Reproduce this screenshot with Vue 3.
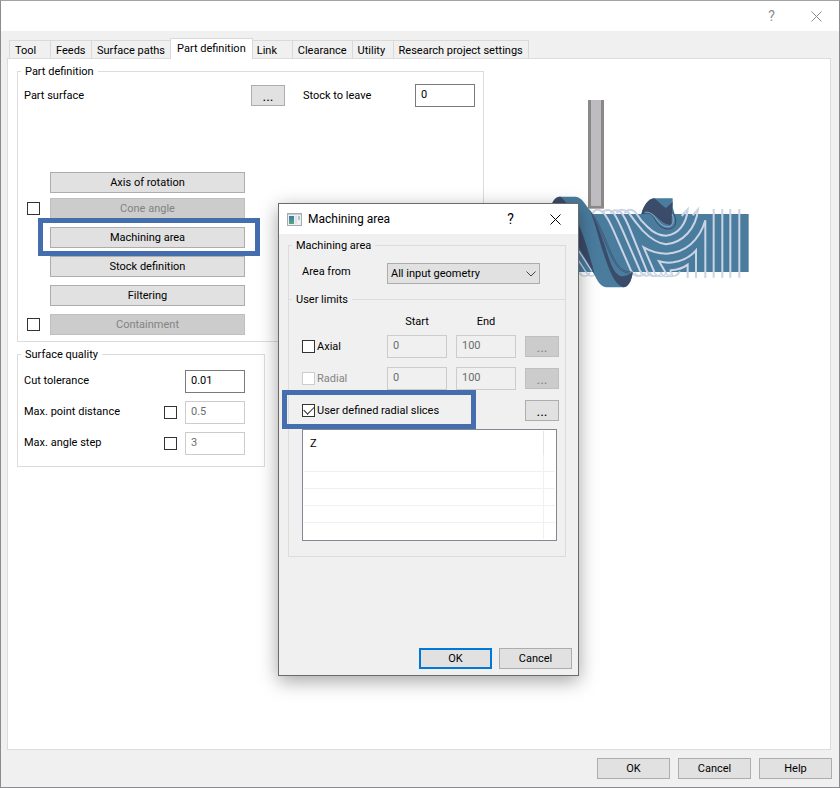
<template>
  <div class="window">
    <header class="titlebar">
      <button class="title-btn" type="button" aria-label="Help">?</button>
      <button class="title-btn" type="button" aria-label="Close">
        <svg width="11" height="11" viewBox="0 0 11 11"><path d="M0.5 0.5l10 10M10.5 0.5l-10 10" /></svg>
      </button>
    </header>

    <nav class="tabs">
      <button
        v-for="tab in tabs"
        :key="tab"
        type="button"
        class="tab"
        :class="{ active: tab === activeTab }"
        @click="activeTab = tab"
      >{{ tab }}</button>
    </nav>

    <main class="panel">
      <div class="column">
        <fieldset class="group part">
          <legend>Part definition</legend>
          <div class="surface-row">
            <span class="surface-label">Part surface</span>
            <button class="btn more" type="button">...</button>
            <label class="stock-label" for="stock">Stock to leave</label>
            <input id="stock" v-model="stock" class="field" type="text">
          </div>
          <div class="actions">
            <div class="action-pair">
              <div class="action">
                <button class="btn wide" type="button">Axis of rotation</button>
              </div>
              <div class="action">
                <input v-model="coneAngle" class="check" type="checkbox" aria-label="Cone angle">
                <button class="btn wide" type="button" :disabled="!coneAngle">Cone angle</button>
              </div>
            </div>
            <div class="action">
              <button class="btn wide" type="button">Machining area</button>
              <span class="marker marker-button"></span>
            </div>
            <div class="action">
              <button class="btn wide" type="button">Stock definition</button>
            </div>
            <div class="action">
              <button class="btn wide" type="button">Filtering</button>
            </div>
            <div class="action">
              <input v-model="containment" class="check" type="checkbox" aria-label="Containment">
              <button class="btn wide" type="button" :disabled="!containment">Containment</button>
            </div>
          </div>
        </fieldset>

        <fieldset class="group quality">
          <legend>Surface quality</legend>
          <div v-for="row in quality" :key="row.id" class="quality-row">
            <label :for="row.id">{{ row.label }}</label>
            <input v-if="row.optional" v-model="row.on" class="check" type="checkbox" :aria-label="row.label">
            <input :id="row.id" v-model="row.value" class="field" type="text" :disabled="row.optional && !row.on">
          </div>
        </fieldset>
      </div>

      <svg class="preview" viewBox="0 0 690 660" width="230" height="220">
        <!-- screw core -->
        <rect x="60" y="402" width="566" height="174" fill="#4a7c9e" />
        <!-- rear flank -->
        <path d="M304 402C312 374 326 356 342 355H398V382C404 400 408 420 404 434C396 452 372 452 358 440C342 424 330 400 304 402Z" fill="#4a7c9e" />
        <path d="M304 402C312 374 326 356 342 355C352 360 366 378 378 384L398 366L394 434C384 436 372 430 360 420C342 404 336 392 304 402Z" fill="#3b4b6a" />
        <path d="M306 402C336 390 340 414 354 432C368 448 390 452 402 440C412 428 406 406 398 396" fill="none" stroke="#3b4b6a" stroke-width="3" />
        <path d="M314 397C336 392 346 416 360 430C374 442 388 444 396 434C402 426 400 410 396 402" fill="none" stroke="#b9c7da" stroke-width="2" />
        <!-- tool path -->
        <g fill="none" stroke="#cbd4e5" stroke-width="6">
          <path d="M158 400C164 386 182 386 193 401C204 416 211 430 218 446L273 572C280 588 294 592 304 584" />
          <path d="M186 400C194 386 212 386 223 402C234 420 241 436 248 452L300 572C308 588 322 592 332 582" />
          <path d="M212 400C218 388 236 388 246 400C254 412 260 424 266 438L320 572C328 590 342 592 352 584" />
          <path d="M230 400C238 386 256 386 268 401C284 424 296 438 308 452C330 474 354 491 378 493C428 488 468 446 474 388L458 406" />
          <path d="M254 400C262 386 278 386 288 399C298 416 308 428 323 441C340 458 358 467 378 467C414 464 440 432 443 388L425 408" />
          <path d="M343 576L311 502C332 514 354 521 380 521C436 518 478 482 496 421V594" />
          <path d="M376 576L357 544C372 548 386 549 400 547C430 542 452 530 468 511V594" />
          <path d="M392 580V571C414 570 430 564 443 554V594" />
          <path d="M521 387V593M547 387V593M571 387V593M598 387V593" />
        </g>
        <g fill="none" stroke="#cbd4e5" stroke-width="4">
          <path d="M284 578C290 590 306 594 318 578M330 576C336 592 356 594 366 576M342 576C350 594 370 594 380 576M362 576C368 594 388 594 398 578M376 576C384 594 404 594 416 576M394 580C400 592 412 590 420 574" />
          <path d="M112 536L142 582M116 512L156 574M118 578C126 592 142 592 150 578M140 578C148 592 162 590 166 580" />
        </g>
        <!-- front flank -->
        <path d="M36 372C42 354 52 350 62 350H106C128 352 136 376 152 392C178 430 198 500 222 540C238 568 250 580 278 576C276 602 264 622 250 622H198C176 618 166 590 152 560L116 490Z" fill="#4a7c9e" />
        <path d="M36 372C42 354 52 350 62 350C78 364 92 388 110 420C128 456 148 520 164 584L116 500Z" fill="#3b4b6a" />
        <path d="M150 392C166 416 180 454 194 496C208 540 218 572 234 584C248 594 266 586 278 576C276 602 264 622 250 622C222 612 210 574 194 530C178 484 166 428 150 392Z" fill="#3b4b6a" />
        <path d="M154 398C184 432 204 508 228 546C242 570 258 576 276 576M158 408C184 446 204 522 230 556C242 572 252 578 270 579M116 506L158 560" fill="none" stroke="#3b4b6a" stroke-width="2" />
        <!-- tool -->
        <rect x="144" y="60" width="48" height="326" fill="#8b8986" />
        <rect x="153" y="60" width="30" height="318" fill="#bfbcc1" />
      </svg>
    </main>

    <footer class="footer">
      <button class="btn foot" type="button">OK</button>
      <button class="btn foot" type="button">Cancel</button>
      <button class="btn foot" type="button">Help</button>
    </footer>

    <section class="dialog" role="dialog" aria-labelledby="dialog-title">
      <header class="dialog-bar">
        <svg class="dialog-icon" width="15" height="13" viewBox="0 0 15 13">
          <defs>
            <linearGradient id="pane" x1="0" y1="0" x2="0" y2="1">
              <stop offset="0" stop-color="#3f78a8" />
              <stop offset="1" stop-color="#58a77c" />
            </linearGradient>
          </defs>
          <rect x="0.5" y="0.5" width="14" height="12" fill="#eef1f4" stroke="#a4abb3" />
          <path d="M1 1.5H14" stroke="#c8ced6" />
          <rect x="2" y="3" width="5" height="8" fill="url(#pane)" />
          <rect x="8" y="3" width="2" height="8" fill="#dde3e8" />
          <rect x="11" y="3" width="2" height="4" fill="#a9cdb8" />
        </svg>
        <h2 id="dialog-title">Machining area</h2>
        <button class="title-btn" type="button" aria-label="Help">?</button>
        <button class="title-btn" type="button" aria-label="Close">
          <svg width="11" height="11" viewBox="0 0 11 11"><path d="M0.5 0.5l10 10M10.5 0.5l-10 10" /></svg>
        </button>
      </header>

      <div class="dialog-body">
        <fieldset class="group area">
          <legend>Machining area</legend>
          <div class="area-row">
            <label for="area-from">Area from</label>
            <div class="select">
              <select id="area-from">
                <option>All input geometry</option>
              </select>
              <svg width="10" height="6" viewBox="0 0 10 6"><path d="M0.5 0.5L5 5L9.5 0.5" /></svg>
            </div>
          </div>
        </fieldset>

        <fieldset class="group limits">
          <legend>User limits</legend>
          <div class="grid-row heads">
            <span></span>
            <span>Start</span>
            <span>End</span>
          </div>
          <div v-for="limit in limits" :key="limit.label" class="grid-row">
            <label class="check-label" :class="{ off: limit.locked }">
              <input v-model="limit.on" class="check" type="checkbox" :disabled="limit.locked">{{ limit.label }}
            </label>
            <input v-model="limit.start" class="field" type="text" :aria-label="limit.label + ' start'" :disabled="!limit.on">
            <input v-model="limit.end" class="field" type="text" :aria-label="limit.label + ' end'" :disabled="!limit.on">
            <button class="btn more" type="button" :disabled="!limit.on">...</button>
          </div>
          <div class="grid-row">
            <label class="check-label slices">
              <input v-model="slices" class="check" type="checkbox">User defined radial slices
            </label>
            <button class="btn more" type="button" :disabled="!slices">...</button>
            <span class="marker marker-slices"></span>
          </div>
          <table class="list">
            <thead>
              <tr><th>Z</th><th></th></tr>
            </thead>
            <tbody>
              <tr v-for="n in 5" :key="n"><td></td><td></td></tr>
            </tbody>
          </table>
        </fieldset>

        <div class="dialog-foot">
          <button class="btn foot primary" type="button">OK</button>
          <button class="btn foot" type="button">Cancel</button>
        </div>
      </div>
    </section>
  </div>
</template>

<script setup>
import { ref } from 'vue'

const tabs = [
  'Tool',
  'Feeds',
  'Surface paths',
  'Part definition',
  'Link',
  'Clearance',
  'Utility',
  'Research project settings'
]
const activeTab = ref('Part definition')

const stock = ref('0')
const coneAngle = ref(false)
const containment = ref(false)

const quality = ref([
  { id: 'cut', label: 'Cut tolerance', value: '0.01', optional: false, on: true },
  { id: 'distance', label: 'Max. point distance', value: '0.5', optional: true, on: false },
  { id: 'angle', label: 'Max. angle step', value: '3', optional: true, on: false }
])

const limits = ref([
  { label: 'Axial', start: '0', end: '100', on: false, locked: false },
  { label: 'Radial', start: '0', end: '100', on: false, locked: true }
])
const slices = ref(true)
</script>

<style>
body {
  margin: 0;
}
</style>

<style scoped>
.window,
.window * {
  box-sizing: border-box;
}

.window {
  position: relative;
  display: flex;
  flex-direction: column;
  min-height: 100vh;
  border: 1px solid #8c8c8e;
  border-top-color: #a2a2a9;
  background: #f0f0f0;
  color: #000;
  font-family: Roboto, "Liberation Sans", sans-serif;
  font-size: 11px;
  line-height: 13px;
}

button,
input,
select {
  margin: 0;
  color: inherit;
  font: inherit;
}

.titlebar {
  display: flex;
  justify-content: flex-end;
  height: 30px;
  background: #fff;
  color: #8c8c8c;
}

.title-btn {
  display: flex;
  align-items: center;
  justify-content: center;
  width: 45px;
  height: 30px;
  padding: 0;
  border: 0;
  background: none;
  font-size: 14px;
}

.title-btn path {
  fill: none;
  stroke: currentColor;
  stroke-width: 1;
}

.tabs {
  display: flex;
  align-items: flex-end;
  height: 28px;
  padding: 0 8px;
}

.tab {
  height: 19px;
  min-width: 42px;
  margin-right: -1px;
  padding: 1px 5px 0;
  border: 1px solid #d9d9d9;
  border-bottom: 0;
  background: #f0f0f0;
  text-align: left;
  white-space: nowrap;
}

.tab.active {
  z-index: 1;
  height: 21px;
  margin-right: -2px;
  padding: 0 6px 1px;
  background: #fff;
}

.panel {
  display: flex;
  flex: 1;
  align-items: flex-start;
  margin: -1px 8px 0 6px;
  padding: 6px 9px;
  border: 1px solid #dcdcdc;
  background: #fff;
}

.column {
  flex: none;
  width: 467px;
}

.group {
  min-width: 0;
  margin: 0;
  padding: 0;
  border: 1px solid #dcdcdc;
}

.group legend {
  margin-left: -3px;
  padding: 0 4px;
}

.dialog .group legend {
  margin-left: -10px;
}

.part {
  padding: 6px 8px 6px 6px;
}

.surface-row {
  display: flex;
  align-items: center;
}

.surface-label {
  flex: 1;
}

.stock-label {
  width: 112px;
  margin-left: 18px;
}

.btn {
  flex: none;
  height: 21px;
  padding: 0;
  border: 1px solid #adadad;
  background: #e1e1e1;
  text-align: center;
}

.btn:disabled {
  border-color: #bfbfbf;
  background: #ccc;
  color: #838383;
}

.more {
  width: 34px;
  padding-top: 1px;
  font-size: 14px;
}

.wide {
  width: 195px;
}

.foot {
  width: 73px;
}

.primary {
  border: 2px solid #0078d7;
}

.field {
  flex: none;
  width: 60px;
  height: 23px;
  padding: 0 5px 2px;
  border: 1px solid #7a7a7a;
  background: #fff;
}

.field:disabled {
  border-color: #ccc;
  background: transparent;
  color: #6d6d6d;
}

.check {
  position: relative;
  flex: none;
  width: 13px;
  height: 13px;
  border: 1px solid #333;
  background: #fff;
  appearance: none;
}

.check:disabled {
  border-color: #ccc;
}

.check:checked::after {
  content: "";
  position: absolute;
  top: -1px;
  left: 3px;
  width: 5px;
  height: 9px;
  border: solid #333;
  border-width: 0 1px 1px 0;
  transform: rotate(45deg);
}

.actions {
  display: flex;
  flex-direction: column;
  gap: 8px;
  margin-top: 65px;
}

.action-pair {
  display: flex;
  flex-direction: column;
  gap: 5px;
}

.action {
  position: relative;
  display: flex;
  align-items: center;
  justify-content: flex-end;
  gap: 10px;
  width: 221px;
}

/* callout frames, drawn over the controls they point at */
.marker {
  position: absolute;
  z-index: 1;
  border: 5px solid #446ead;
  pointer-events: none;
}

.marker-button {
  inset: -9px -15px -8px 14px;
}

.quality {
  width: 248px;
  margin-top: 6px;
  padding: 9px 19px 11px 6px;
}

.quality-row {
  display: flex;
  align-items: center;
  gap: 8px;
}

.quality-row + .quality-row {
  margin-top: 8px;
}

.quality-row label {
  flex: 1;
  padding-bottom: 2px;
}

.preview {
  flex: none;
  margin: 15px 0 0 56px;
}

.footer {
  display: flex;
  justify-content: flex-end;
  gap: 8px;
  padding: 8px 7px;
}

.dialog {
  position: absolute;
  z-index: 2;
  top: 202px;
  left: 277px;
  width: 301px;
  border: 1px solid #6b6b6b;
  background: #f0f0f0;
  box-shadow: 0 5px 18px rgba(0, 0, 0, 0.36);
}

.dialog-bar {
  display: flex;
  align-items: center;
  height: 30px;
  padding-left: 8px;
  background: #fff;
}

.dialog-bar h2 {
  flex: 1;
  margin: 0 0 0 6px;
  font-size: 12px;
  font-weight: 400;
}

.dialog-body {
  padding: 5px 6px 6px 9px;
}

.area,
.limits {
  margin-right: 6px;
}

.area {
  height: 60px;
  padding: 11px 0 0 13px;
  border-bottom: 0;
}

.area-row {
  display: flex;
}

.area-row label {
  width: 85px;
  padding-top: 2px;
}

.select {
  position: relative;
  width: 153px;
}

.select select {
  display: block;
  width: 100%;
  height: 21px;
  padding: 0 20px 0 3px;
  border: 1px solid #adadad;
  border-radius: 0;
  background: #e1e1e1;
  appearance: none;
}

.select svg {
  position: absolute;
  top: 8px;
  right: 4px;
  fill: none;
  stroke: #444;
  pointer-events: none;
}

.limits {
  margin-top: -6px;
  padding: 8px 8px 15px 13px;
}

.grid-row {
  position: relative;
  display: grid;
  grid-template-columns: 76px 60px 60px 34px;
  align-items: center;
  column-gap: 9px;
  height: 23px;
  margin-bottom: 9px;
}

.heads {
  height: 14px;
  margin-bottom: 7px;
  text-align: center;
}

.check-label {
  display: flex;
  align-items: center;
  gap: 2px;
  white-space: nowrap;
}

.check-label.off {
  color: #838383;
}

.slices {
  grid-column: span 3;
}

.marker-slices {
  top: -9px;
  left: -20px;
  width: 194px;
  height: 39px;
}

.list {
  width: 100%;
  margin-top: -2px;
  padding: 1px;
  border: 1px solid #828790;
  border-spacing: 0;
  background: #fff;
  table-layout: fixed;
}

.list th {
  height: 24px;
  padding: 0 6px;
  border-right: 1px solid #e5e5e5;
  font-weight: 400;
  text-align: left;
}

.list th:last-child,
.list td:last-child {
  width: 11px;
  padding: 0;
  border-right: 0;
}

.list td {
  height: 17px;
  padding: 0;
  border-right: 1px solid #f0f0f0;
  border-bottom: 1px solid #f0f0f0;
}

.list tr:last-child td {
  height: 16px;
  border-bottom: 0;
}

.dialog-foot {
  display: flex;
  justify-content: flex-end;
  gap: 7px;
  margin-top: 91px;
}
</style>
